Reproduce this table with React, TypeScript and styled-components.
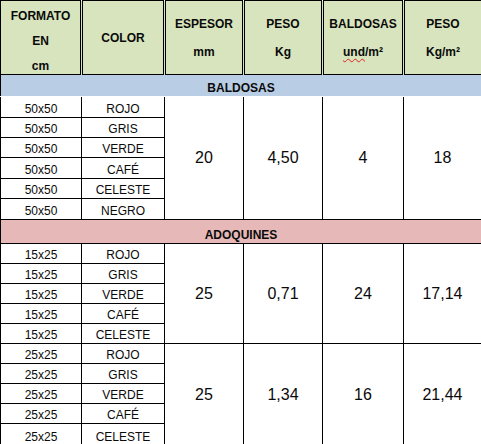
import React from "react";
import styled, { createGlobalStyle } from "styled-components";

const Global = createGlobalStyle`
  html, body { margin: 0; padding: 0; background: #ffffff; }
  body { font-family: "Liberation Sans", Arial, sans-serif; color: #000; }
`;

const Table = styled.table`
  width: 481px;
  border-collapse: collapse;
  table-layout: fixed;
  font-family: "Liberation Sans", Arial, sans-serif;
  color: #0a0a0a;
`;

const HeadRow = styled.tr`
  height: 74px;
`;

const HeadCell = styled.th<{ $first?: boolean; $last?: boolean }>`
  padding: 0;
  background: #d7e4bd;
  text-align: center;
  vertical-align: top;
  border-top: 1px solid #000;
  border-bottom: 1px solid #000;
  border-left: ${(p) => (p.$first ? "1px solid #000" : "3px double #000")};
  border-right: ${(p) => (p.$last ? "1px solid #000" : "3px double #000")};
`;

const HeadText = styled.div<{ $lh: number; $pt: number }>`
  box-sizing: border-box;
  height: 72px;
  padding-top: ${(p) => p.$pt}px;
  font-size: 12px;
  font-weight: bold;
  line-height: ${(p) => p.$lh}px;
  overflow: visible;
  white-space: nowrap;
`;

const Spell = styled.span`
  text-decoration: underline wavy #e02020;
  text-decoration-thickness: 1px;
  text-underline-offset: 2px;
`;

const BandRow = styled.tr<{ $h: number }>`
  height: ${(p) => p.$h}px;
`;

const BandCell = styled.td<{ $bg: string; $bottom: string }>`
  padding: 0 0 1px 0;
  background: ${(p) => p.$bg};
  font-size: 12px;
  line-height: 14px;
  font-weight: bold;
  text-align: center;
  vertical-align: bottom;
  border: 1px solid #000;
  border-bottom: 1px solid ${(p) => p.$bottom};
`;

const DataRow = styled.tr<{ $h: number }>`
  height: ${(p) => p.$h}px;
`;

const TextCell = styled.td`
  padding: 0 0 1px 0;
  font-size: 12px;
  line-height: 14px;
  text-align: center;
  vertical-align: bottom;
  border: 1px solid #000;
`;

const NumCell = styled.td`
  padding: 0;
  font-size: 16px;
  text-align: center;
  vertical-align: middle;
  border: 1px solid #000;
`;

type Group = {
  format: string;
  colors: string[];
  espesor: string;
  peso: string;
  und: string;
  kgm: string;
  heights: number[];
};

const baldosas: Group[] = [
  {
    format: "50x50",
    colors: ["ROJO", "GRIS", "VERDE", "CAFÉ", "CELESTE", "NEGRO"],
    espesor: "20",
    peso: "4,50",
    und: "4",
    kgm: "18",
    heights: [21, 20, 20, 21, 20, 21],
  },
];

const adoquines: Group[] = [
  {
    format: "15x25",
    colors: ["ROJO", "GRIS", "VERDE", "CAFÉ", "CELESTE"],
    espesor: "25",
    peso: "0,71",
    und: "24",
    kgm: "17,14",
    heights: [20, 20, 20, 20, 20],
  },
  {
    format: "25x25",
    colors: ["ROJO", "GRIS", "VERDE", "CAFÉ", "CELESTE"],
    espesor: "25",
    peso: "1,34",
    und: "16",
    kgm: "21,44",
    heights: [20, 20, 20, 20, 22],
  },
];

function GroupRows({ g }: { g: Group }) {
  return (
    <>
      {g.colors.map((c, i) => (
        <DataRow key={c + i} $h={g.heights[i]}>
          <TextCell>{g.format}</TextCell>
          <TextCell>{c}</TextCell>
          {i === 0 && (
            <>
              <NumCell rowSpan={g.colors.length}>{g.espesor}</NumCell>
              <NumCell rowSpan={g.colors.length}>{g.peso}</NumCell>
              <NumCell rowSpan={g.colors.length}>{g.und}</NumCell>
              <NumCell rowSpan={g.colors.length}>{g.kgm}</NumCell>
            </>
          )}
        </DataRow>
      ))}
    </>
  );
}

export default function App() {
  return (
    <>
      <Global />
      <Table>
        <colgroup>
          <col style={{ width: 81 }} />
          <col style={{ width: 83 }} />
          <col style={{ width: 79 }} />
          <col style={{ width: 79 }} />
          <col style={{ width: 81 }} />
          <col style={{ width: 78 }} />
        </colgroup>
        <thead>
          <HeadRow>
            <HeadCell $first>
              <HeadText $lh={25} $pt={3}>
                FORMATO
                <br />
                EN
                <br />
                cm
              </HeadText>
            </HeadCell>
            <HeadCell>
              <HeadText $lh={28} $pt={23}>COLOR</HeadText>
            </HeadCell>
            <HeadCell>
              <HeadText $lh={28} $pt={9}>
                ESPESOR
                <br />
                mm
              </HeadText>
            </HeadCell>
            <HeadCell>
              <HeadText $lh={28} $pt={9}>
                PESO
                <br />
                Kg
              </HeadText>
            </HeadCell>
            <HeadCell>
              <HeadText $lh={28} $pt={9}>
                BALDOSAS
                <br />
                <Spell>und</Spell>/m²
              </HeadText>
            </HeadCell>
            <HeadCell $last>
              <HeadText $lh={28} $pt={9}>
                PESO
                <br />
                Kg/m²
              </HeadText>
            </HeadCell>
          </HeadRow>
        </thead>
        <tbody>
          <BandRow $h={22}>
            <BandCell colSpan={6} $bg="#b9cde5" $bottom="#ffffff">
              BALDOSAS
            </BandCell>
          </BandRow>
          {baldosas.map((g) => (
            <GroupRows key={g.format} g={g} />
          ))}
          <BandRow $h={24}>
            <BandCell colSpan={6} $bg="#e6b9b8" $bottom="#000">
              ADOQUINES
            </BandCell>
          </BandRow>
          {adoquines.map((g) => (
            <GroupRows key={g.format} g={g} />
          ))}
        </tbody>
      </Table>
    </>
  );
}
